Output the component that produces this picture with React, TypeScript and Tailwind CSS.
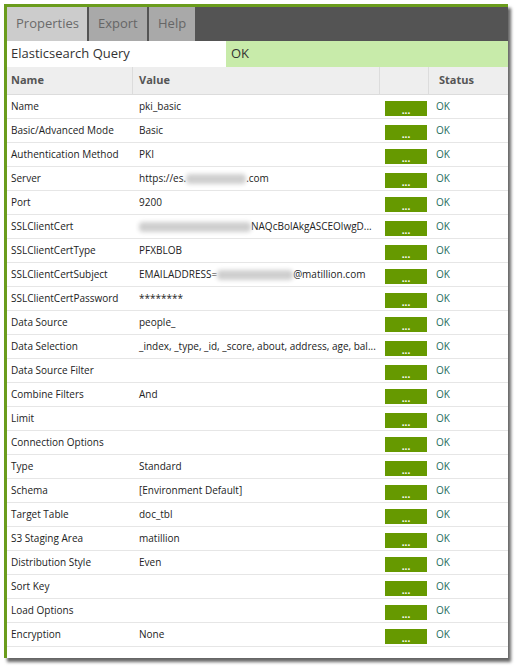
import React from "react";

type Row = { name: string; value: React.ReactNode };

const Blur = ({ w }: { w: number }) => (
  <span
    className="inline-block h-[10px] bg-[#cfcfcf] blur-[2px] align-middle rounded-sm"
    style={{ width: w }}
  />
);

const rows: Row[] = [
  { name: "Name", value: "pki_basic" },
  { name: "Basic/Advanced Mode", value: "Basic" },
  { name: "Authentication Method", value: "PKI" },
  {
    name: "Server",
    value: (
      <>
        https://es.
        <Blur w={60} />
        .com
      </>
    ),
  },
  { name: "Port", value: "9200" },
  {
    name: "SSLClientCert",
    value: (
      <>
        <Blur w={112} />
        NAQcBolAkgASCEOlwgD...
      </>
    ),
  },
  { name: "SSLClientCertType", value: "PFXBLOB" },
  {
    name: "SSLClientCertSubject",
    value: (
      <>
        EMAILADDRESS=
        <Blur w={76} />
        @matillion.com
      </>
    ),
  },
  { name: "SSLClientCertPassword", value: "********" },
  { name: "Data Source", value: "people_" },
  {
    name: "Data Selection",
    value: "_index, _type, _id, _score, about, address, age, bal...",
  },
  { name: "Data Source Filter", value: "" },
  { name: "Combine Filters", value: "And" },
  { name: "Limit", value: "" },
  { name: "Connection Options", value: "" },
  { name: "Type", value: "Standard" },
  { name: "Schema", value: "[Environment Default]" },
  { name: "Target Table", value: "doc_tbl" },
  { name: "S3 Staging Area", value: "matillion" },
  { name: "Distribution Style", value: "Even" },
  { name: "Sort Key", value: "" },
  { name: "Load Options", value: "" },
  { name: "Encryption", value: "None" },
];

export default function App() {
  return (
    <div
      className="w-[519px] h-[671px] bg-white pl-[4px] pt-[4px]"
      style={{ fontFamily: '"Open Sans", "Noto Sans", sans-serif' }}
    >
      <div className="w-[504px] h-[654px] bg-white border-l-[3px] border-t-[3px] border-[#6a9c1c] shadow-[3px_4px_3px_rgba(0,0,0,0.6)] flex flex-col">
        {/* tabs */}
        <div className="h-[34px] bg-[#545454] flex">
          <div className="w-[80px] bg-[#cccccc] text-[#6a6a6a] text-[13px] flex items-center pl-[9px]">
            Properties
          </div>
          <div className="w-[2px]" />
          <div className="w-[58px] bg-[#a9a9a9] text-[#666666] text-[13px] flex items-center pl-[9px]">
            Export
          </div>
          <div className="w-[2px]" />
          <div className="w-[46px] bg-[#a9a9a9] text-[#666666] text-[13px] flex items-center pl-[9px]">
            Help
          </div>
        </div>
        {/* title */}
        <div className="h-[26px] flex text-[13px] text-[#333333]">
          <div className="w-[219px] bg-white flex items-center pl-[4px]">
            Elasticsearch Query
          </div>
          <div className="flex-1 bg-[#c8ebaa] flex items-center pl-[5px]">OK</div>
        </div>
        {/* header */}
        <div className="h-[28px] grid grid-cols-[126px_247px_49px_1fr] bg-[#eeeeee] border-b border-[#dcdcdc] text-[11px] font-bold text-[#555555]">
          <div className="flex items-center pl-[4px] border-r border-[#dcdcdc]">Name</div>
          <div className="flex items-center pl-[6px] border-r border-[#dcdcdc]">Value</div>
          <div className="border-r border-[#dcdcdc]" />
          <div className="flex items-center pl-[10px]">Status</div>
        </div>
        {/* rows */}
        {rows.map((r) => (
          <div
            key={r.name}
            className="h-[24px] grid grid-cols-[126px_247px_49px_1fr] border-b border-[#e6e6e6] text-[10px] text-[#222222]"
          >
            <div className="flex items-center pl-[4px] whitespace-nowrap">{r.name}</div>
            <div className="flex items-center pl-[6px] whitespace-nowrap overflow-hidden">
              {r.value}
            </div>
            <div className="flex items-center pl-[5px] pt-[3px]">
              <div className="w-[42px] h-[15px] bg-[#669900] flex items-end justify-center text-white text-[10px] font-bold leading-[10px] pb-[1px]">
                ...
              </div>
            </div>
            <div className="flex items-center pl-[7px] text-[#1e6e5c]">OK</div>
          </div>
        ))}
      </div>
    </div>
  );
}
